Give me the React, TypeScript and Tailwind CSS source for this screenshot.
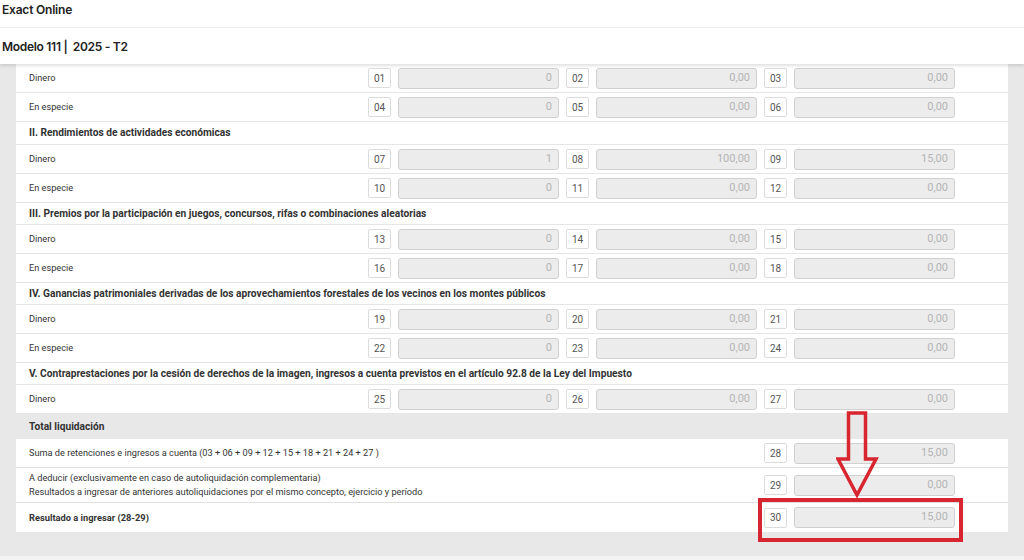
type Cell = { code: string; value: string };
type Row =
  | { kind: 'section'; title: string }
  | { kind: 'data'; label: string; cells: Cell[] };

const rows: Row[] = [
  { kind: 'data', label: 'Dinero', cells: [{ code: '01', value: '0' }, { code: '02', value: '0,00' }, { code: '03', value: '0,00' }] },
  { kind: 'data', label: 'En especie', cells: [{ code: '04', value: '0' }, { code: '05', value: '0,00' }, { code: '06', value: '0,00' }] },
  { kind: 'section', title: 'II. Rendimientos de actividades económicas' },
  { kind: 'data', label: 'Dinero', cells: [{ code: '07', value: '1' }, { code: '08', value: '100,00' }, { code: '09', value: '15,00' }] },
  { kind: 'data', label: 'En especie', cells: [{ code: '10', value: '0' }, { code: '11', value: '0,00' }, { code: '12', value: '0,00' }] },
  { kind: 'section', title: 'III. Premios por la participación en juegos, concursos, rifas o combinaciones aleatorias' },
  { kind: 'data', label: 'Dinero', cells: [{ code: '13', value: '0' }, { code: '14', value: '0,00' }, { code: '15', value: '0,00' }] },
  { kind: 'data', label: 'En especie', cells: [{ code: '16', value: '0' }, { code: '17', value: '0,00' }, { code: '18', value: '0,00' }] },
  { kind: 'section', title: 'IV. Ganancias patrimoniales derivadas de los aprovechamientos forestales de los vecinos en los montes públicos' },
  { kind: 'data', label: 'Dinero', cells: [{ code: '19', value: '0' }, { code: '20', value: '0,00' }, { code: '21', value: '0,00' }] },
  { kind: 'data', label: 'En especie', cells: [{ code: '22', value: '0' }, { code: '23', value: '0,00' }, { code: '24', value: '0,00' }] },
  { kind: 'section', title: 'V. Contraprestaciones por la cesión de derechos de la imagen, ingresos a cuenta previstos en el artículo 92.8 de la Ley del Impuesto' },
  { kind: 'data', label: 'Dinero', cells: [{ code: '25', value: '0' }, { code: '26', value: '0,00' }, { code: '27', value: '0,00' }] },
];

const Field = ({ code, value }: Cell) => (
  <div className="flex items-center gap-[7px]">
    <div className="flex h-[20px] w-[23px] items-center justify-center rounded-[2px] border border-[#dcdcdc] bg-white text-[10px] text-[#555]">
      {code}
    </div>
    <div className="flex h-[21px] w-[161px] items-center justify-end rounded-[3px] border border-[#d0d0d0] bg-[#ececec] pr-[6px] text-[11px] text-[#b4b4b4]">
      {value}
    </div>
  </div>
);

const App = () => {
  return (
    <div
      className="relative flex h-[560px] w-[1024px] flex-col overflow-hidden bg-[#e8e8e8]"
      style={{ fontFamily: 'Roboto, "Liberation Sans", Arial, sans-serif' }}
    >
      {/* top header */}
      <div className="relative z-10 bg-white shadow-[0_2px_3px_rgba(0,0,0,0.12)]" style={{ fontFamily: 'Inter, "Liberation Sans", sans-serif' }}>
        <div className="flex h-[28px] items-start border-b border-[#ececec] pl-[2px] pt-[1px] text-[12px] font-semibold tracking-[-0.2px] text-[#222]">
          Exact Online
        </div>
        <div className="flex h-[36px] items-center whitespace-pre pl-[2px] pt-[1px] text-[12px] font-semibold tracking-[-0.3px] text-[#222]">
          {'Modelo 111 |  2025 - T2'}
        </div>
      </div>

      {/* form panel */}
      <div className="flex-1 pl-[16px] pr-[16px]">
        <div className="bg-white text-[#333]">
          {rows.map((r, i) =>
            r.kind === 'section' ? (
              <div
                key={i}
                className={`flex items-center border-b border-[#e6e6e6] pl-[13px] text-[10.2px] font-bold text-[#333] ${i === 2 ? 'h-[23px]' : 'h-[22px]'}`}
              >
                {r.title}
              </div>
            ) : (
              <div key={i} className="flex h-[29px] items-center border-b border-[#e6e6e6] pl-[13px] text-[9.2px]">
                <div className="flex-1">{r.label}</div>
                <div className="flex items-center gap-[7px] pr-[53px]">
                  {r.cells.map((c) => (
                    <Field key={c.code} {...c} />
                  ))}
                </div>
              </div>
            ),
          )}

          <div className="flex h-[25px] items-center bg-[#e8e8e8] pl-[13px] pt-[1px] text-[10.2px] font-bold text-[#333]">
            Total liquidación
          </div>

          <div className="flex h-[29px] items-center border-b border-[#e0e0e0] pl-[13px] text-[9.2px]">
            <div className="flex-1">Suma de retenciones e ingresos a cuenta (03 + 06 + 09 + 12 + 15 + 18 + 21 + 24 + 27 )</div>
            <div className="pr-[53px]">
              <Field code="28" value="15,00" />
            </div>
          </div>
          <div className="flex h-[35px] items-center border-b border-[#e0e0e0] pl-[13px] text-[9.2px]">
            <div className="flex-1 leading-[14px]">
              <div>A deducir (exclusivamente en caso de autoliquidación complementaria)</div>
              <div>Resultados a ingresar de anteriores autoliquidaciones por el mismo concepto, ejercicio y período</div>
            </div>
            <div className="pr-[53px]">
              <Field code="29" value="0,00" />
            </div>
          </div>
          <div className="flex h-[29px] items-center pl-[13px] text-[9.2px]">
            <div className="flex-1 text-[9.3px] font-bold">Resultado a ingresar (28-29)</div>
            <div className="pr-[53px]">
              <Field code="30" value="15,00" />
            </div>
          </div>
        </div>
      </div>
      <div className="h-[4px] bg-[#f3f3f3]" />

      {/* red annotation */}
      <svg className="absolute left-[836px] top-[411px]" width="44" height="88" viewBox="0 0 44 88">
        <path d="M12.5 2 H29.5 V48 H40 L21 84 L2 48 H12.5 Z" fill="none" stroke="#d7262f" strokeWidth="3.5" strokeLinejoin="miter" />
      </svg>
      <div className="absolute left-[758px] top-[498px] h-[44px] w-[205px] border-[4px] border-[#d7262f]" />
    </div>
  );
};

export default App;
